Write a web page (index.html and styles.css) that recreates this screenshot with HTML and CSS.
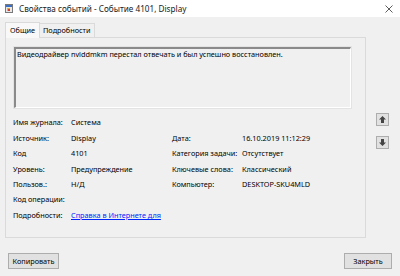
FILE: index.html
```html
<!DOCTYPE html>
<html lang="ru">
<head>
  <meta charset="UTF-8">
  <title>Свойства событий</title>
  <link rel="stylesheet" href="styles.css">
</head>
<body>
  <div class="window">
    <div class="titlebar">
      <svg class="app-icon" width="8" height="9" viewBox="0 0 8 9">
        <rect x="0.5" y="0.5" width="7" height="8" fill="#e8e8e8" stroke="#7a7a7a"/>
        <rect x="1" y="1" width="6" height="2" fill="#3b6fc4"/>
        <rect x="2" y="4" width="3" height="3" fill="#e0b030"/>
        <rect x="3" y="5" width="2" height="2" fill="#d23c2c"/>
      </svg>
      <span class="title">Свойства событий - Событие 4101, Display</span>
      <svg class="close" width="8" height="8" viewBox="0 0 8 8">
        <path d="M0.5 0.5 L7.5 7.5 M7.5 0.5 L0.5 7.5" stroke="#333" stroke-width="0.8"/>
      </svg>
    </div>

    <div class="content">
      <div class="main">
        <div class="tabbox">
          <div class="tabs">
            <div class="tab active">Общие</div>
            <div class="tab">Подробности</div>
          </div>
          <div class="panel">
            <div class="message">Видеодрайвер nvlddmkm перестал отвечать и был успешно восстановлен.</div>
            <div class="props">
              <span class="label">Имя журнала:</span><span class="value span3">Система</span>
              <span class="label">Источник:</span><span class="value">Display</span>
              <span class="label">Дата:</span><span class="value">16.10.2019 11:12:29</span>
              <span class="label">Код</span><span class="value">4101</span>
              <span class="label">Категория задачи:</span><span class="value">Отсутствует</span>
              <span class="label">Уровень:</span><span class="value">Предупреждение</span>
              <span class="label">Ключевые слова:</span><span class="value">Классический</span>
              <span class="label">Пользов.:</span><span class="value">Н/Д</span>
              <span class="label">Компьютер:</span><span class="value">DESKTOP-SKU4MLD</span>
              <span class="label">Код операции:</span><span class="value span3"></span>
              <span class="label">Подробности:</span><span class="value span3"><a href="#" class="link">Справка в Интернете для</a></span>
            </div>
          </div>
        </div>
        <div class="side">
          <button class="arrow-btn" title="Предыдущее">
            <svg width="7" height="7" viewBox="0 0 7 7"><path d="M3.5 0 L7 3.5 L5 3.5 L5 7 L2 7 L2 3.5 L0 3.5 Z" fill="#444"/></svg>
          </button>
          <button class="arrow-btn" title="Следующее">
            <svg width="7" height="7" viewBox="0 0 7 7"><path d="M3.5 7 L7 3.5 L5 3.5 L5 0 L2 0 L2 3.5 L0 3.5 Z" fill="#444"/></svg>
          </button>
        </div>
      </div>
      <div class="footer">
        <button class="btn btn-copy">Копировать</button>
        <button class="btn btn-close">Закрыть</button>
      </div>
    </div>
  </div>
</body>
</html>
```
FILE: styles.css
```css
:root {
  --bg: #f0f0f0;
  --border-light: #dadada;
  --btn-bg: #e1e1e1;
  --btn-border: #adadad;
  --text: #000;
  --link: #0026ff;
}
body {
  margin: 0;
  padding: 0;
  font-family: "Noto Sans", "Open Sans", sans-serif;
  font-size: 7.3px;
  color: var(--text);
  background: var(--bg);
}
.window {
  width: 400px;
  height: 276px;
  display: flex;
  flex-direction: column;
}
.titlebar {
  height: 17px;
  background: #fff;
  display: flex;
  align-items: center;
  padding-left: 5px;
  padding-right: 7px;
}
.app-icon {
  margin-right: 6px;
}
.title {
  flex: 1;
  font-size: 8.2px;
  color: #1a1a1a;
}
.content {
  flex: 1;
  display: flex;
  flex-direction: column;
  padding: 5px 8px 7px 5px;
}
.main {
  display: flex;
  gap: 10px;
}
.tabbox {
  width: 361px;
}
.tabs {
  display: flex;
  align-items: flex-end;
  height: 15px;
}
.tab {
  border: 1px solid var(--border-light);
  border-bottom: none;
  padding: 0 3px;
  height: 13px;
  line-height: 13px;
  background: var(--bg);
}
.tab.active {
  height: 15px;
  line-height: 15px;
  background: #f8f8f8;
  padding: 0 4px;
  margin-bottom: -1px;
  position: relative;
  z-index: 1;
}
.tab + .tab {
  border-left: none;
}
.panel {
  border: 1px solid var(--border-light);
  height: 201px;
  box-sizing: border-box;
  padding: 9px 14px 0 7px;
}
.message {
  height: 61px;
  border-top: 2px solid #8a8a8a;
  border-left: 2px solid #8a8a8a;
  border-right: 1px solid #fff;
  border-bottom: 1px solid #fff;
  box-shadow: 0 0 0 1px #e3e3e3;
  padding: 0 1px;
  box-sizing: border-box;
  margin-left: 1px;
}
.props {
  display: grid;
  grid-template-columns: 58px 101px 70px 1fr;
  grid-auto-rows: 15.45px;
  align-items: center;
  margin-top: 6.5px;
  white-space: nowrap;
}
.span3 {
  grid-column: span 3;
}
.link {
  color: var(--link);
  text-decoration: underline;
}
.side {
  display: flex;
  flex-direction: column;
  gap: 10px;
  padding-top: 91px;
}
.arrow-btn {
  width: 13px;
  height: 13px;
  padding: 0;
  border: 1px solid var(--btn-border);
  background: var(--btn-bg);
  display: flex;
  align-items: center;
  justify-content: center;
}
.footer {
  margin-top: auto;
  display: flex;
  justify-content: space-between;
  padding-left: 3px;
}
.btn {
  font-family: inherit;
  font-size: 7.3px;
  height: 16px;
  padding: 0;
  border: 1px solid var(--btn-border);
  background: var(--btn-bg);
  color: var(--text);
}
.btn-copy {
  width: 51px;
}
.btn-close {
  width: 48px;
}
```
